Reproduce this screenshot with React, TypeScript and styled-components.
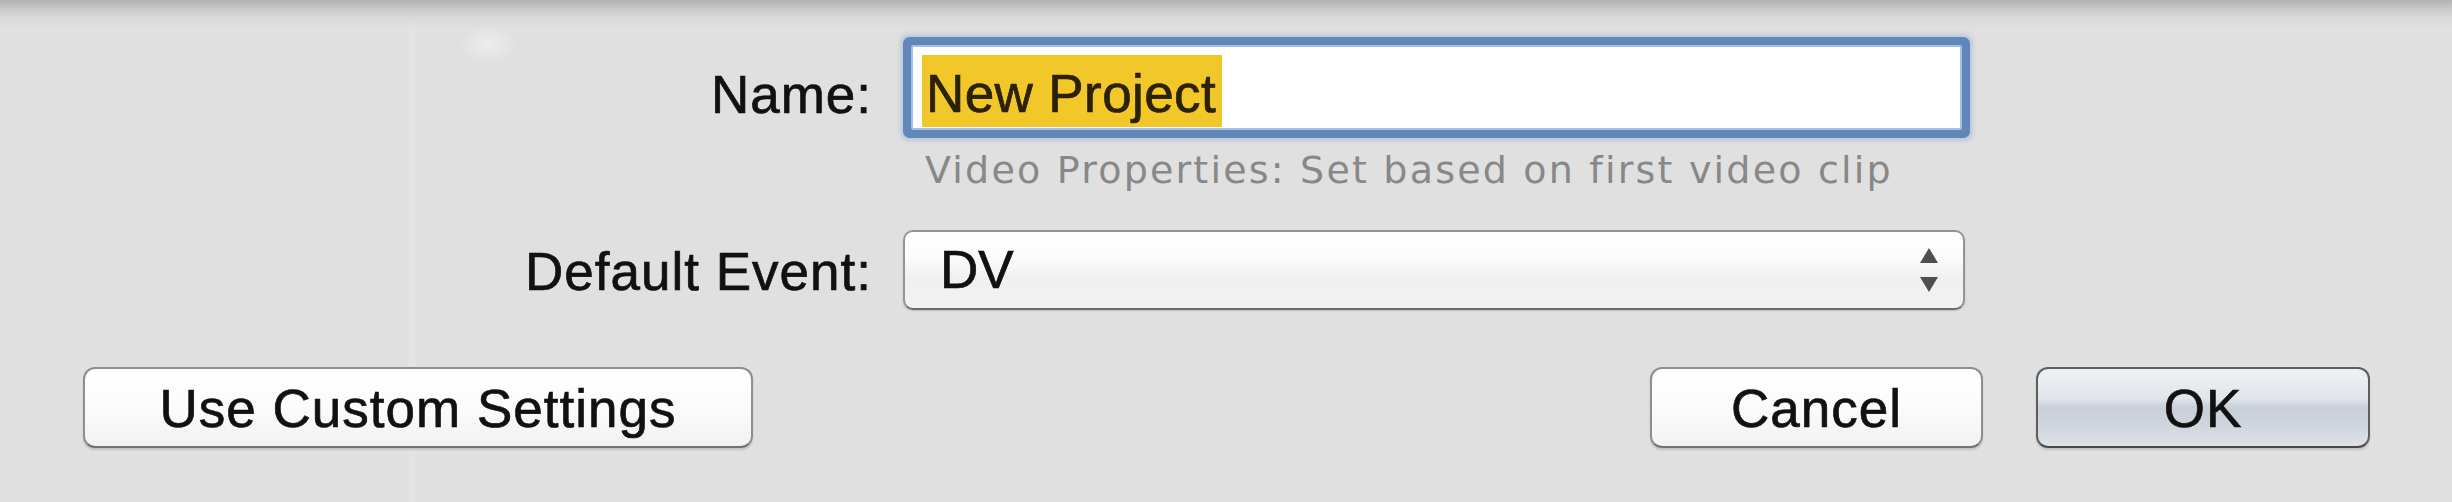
import React from 'react';
import styled, { createGlobalStyle } from 'styled-components';

const bgHex = '#e0e0e0';
const textHex = '#111111';
const hintHex = '#888888';
const ringHex = '#5f87b9';
const selectHex = '#f2c72a';

const GlobalStyle = createGlobalStyle`
    html, body {
        margin: 0;
        padding: 0;
        background: ${bgHex};
    }
    body {
        font-family: "Liberation Sans", Arial, sans-serif;
    }
`;

// the window behind shows through faintly: a divider and a checkbox glow
const Dialog = styled.div`
    width: 2452px;
    height: 502px;
    box-sizing: border-box;
    padding-top: 45px;
    display: flex;
    flex-direction: column;
    overflow: hidden;
    background:
        linear-gradient(to bottom, #b2b2b2 0, #c6c6c6 8px, #d8d8d8 17px, rgba(224, 224, 224, 0) 28px),
        radial-gradient(ellipse 30px 20px at 488px 44px, rgba(240, 240, 240, 0.8) 0, rgba(240, 240, 240, 0) 100%),
        linear-gradient(to right, transparent 406px, #e4e4e4 411px, #e4e4e4 414px, transparent 419px),
        ${bgHex};
`;

const FieldRow = styled.div<{ $top: number }>`
    display: flex;
    align-items: flex-start;
    margin-top: ${p => p.$top}px;
`;

const Label = styled.label<{ $offset: number }>`
    flex: none;
    width: 872px;
    text-align: right;
    font-size: 53px;
    line-height: 59px;
    letter-spacing: 1px;
    color: ${textHex};
    -webkit-text-stroke: 0.7px ${textHex};
    margin-top: ${p => p.$offset}px;
`;

const FieldSlot = styled.div`
    margin-left: 31px;
`;

const NameInput = styled.div`
    box-sizing: border-box;
    width: 1051px;
    height: 85px;
    margin-left: 8px;
    background: #ffffff;
    border: 2px solid #a3c0e2;
    border-radius: 2px;
    box-shadow: 0 0 0 8px ${ringHex}, 0 0 5px 10px rgba(120, 160, 210, 0.45);
    padding: 8px 0 0 9px;
`;

const Selection = styled.span`
    display: inline-block;
    background: ${selectHex};
    color: #2b2104;
    -webkit-text-stroke: 0.7px #2b2104;
    font-size: 53px;
    line-height: 59px;
    letter-spacing: 0.4px;
    padding: 9px 6px 4px 4px;
`;

const Hint = styled.div`
    margin: 18px 0 0 925px;
    font-family: "DejaVu Sans", sans-serif;
    font-size: 38px;
    line-height: 44px;
    letter-spacing: 2.2px;
    color: ${hintHex};
`;

const Popup = styled.div`
    box-sizing: border-box;
    width: 1062px;
    height: 80px;
    display: flex;
    align-items: flex-start;
    justify-content: space-between;
    border: 2px solid #949494;
    border-bottom-color: #6c6c6c;
    border-radius: 10px;
    background: linear-gradient(to bottom, #ffffff 0%, #fbfbfb 35%, #f0f0f0 60%, #f2f2f2 100%);
    box-shadow: 0 1px 2px rgba(0, 0, 0, 0.15);
    padding: 8px 23px 0 35px;
`;

const PopupValue = styled.span`
    font-size: 53px;
    line-height: 59px;
    color: ${textHex};
    -webkit-text-stroke: 0.7px ${textHex};
`;

const Stepper = styled.svg`
    margin-top: 8px;
    flex: none;
`;

const ButtonRow = styled.div`
    display: flex;
    margin-top: 57px;
    padding: 0 82px 0 83px;
`;

const Button = styled.button<{ $width: number; $default?: boolean; $push?: boolean }>`
    box-sizing: border-box;
    width: ${p => p.$width}px;
    height: 81px;
    margin: 0;
    margin-left: ${p => (p.$push ? 'auto' : p.$default ? '53px' : '0')};
    display: flex;
    align-items: center;
    justify-content: center;
    padding: 2px 0 0;
    font-family: "Liberation Sans", Arial, sans-serif;
    font-size: 53px;
    line-height: 59px;
    letter-spacing: 1px;
    color: ${textHex};
    -webkit-text-stroke: 0.7px ${textHex};
    border: 2px solid ${p => (p.$default ? '#5e5e5e' : '#8e8e8e')};
    border-bottom-color: ${p => (p.$default ? '#4a4a4a' : '#727272')};
    border-radius: 12px;
    box-shadow: 0 2px 2px rgba(0, 0, 0, 0.14);
    background: ${p => p.$default
        ? 'linear-gradient(to bottom, #eef1f4 0%, #e2e6eb 38%, #c7cfd9 50%, #cdd4dd 70%, #dfe3e8 100%)'
        : 'linear-gradient(to bottom, #ffffff 0%, #fbfbfb 50%, #f2f2f2 100%)'};
`;

const App = () => {
    return (
        <>
            <GlobalStyle />
            <Dialog>
                <FieldRow $top={0}>
                    <Label $offset={20}>Name:</Label>
                    <FieldSlot>
                        <NameInput>
                            <Selection>New Project</Selection>
                        </NameInput>
                    </FieldSlot>
                </FieldRow>
                <Hint>Video Properties: Set based on first video clip</Hint>
                <FieldRow $top={38}>
                    <Label $offset={12}>Default Event:</Label>
                    <FieldSlot>
                        <Popup>
                            <PopupValue>DV</PopupValue>
                            <Stepper width="22" height="44" viewBox="0 0 22 44">
                                <polygon points="11,0 20,15 2,15" fill="#4f4f4f" />
                                <polygon points="2,29 20,29 11,44" fill="#4f4f4f" />
                            </Stepper>
                        </Popup>
                    </FieldSlot>
                </FieldRow>
                <ButtonRow>
                    <Button $width={670}>Use Custom Settings</Button>
                    <Button $width={333} $push>Cancel</Button>
                    <Button $width={334} $default>OK</Button>
                </ButtonRow>
            </Dialog>
        </>
    );
};

export default App;
